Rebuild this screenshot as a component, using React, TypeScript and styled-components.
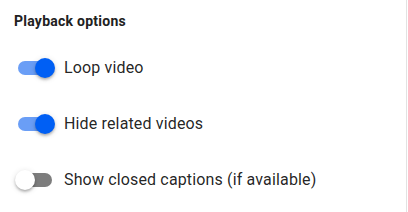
import React, { useState } from 'react';
import styled, { createGlobalStyle } from 'styled-components';

const GlobalStyle = createGlobalStyle`
  body {
    margin: 0;
    background: #ffffff;
    font-family: Roboto, 'Liberation Sans', Arial, sans-serif;
  }
`;

const Panel = styled.div`
  width: 407px;
  height: 212px;
  box-sizing: border-box;
  border-right: 1px solid #e2e2e2;
  padding: 11px 16px 0 14px;
`;

const Heading = styled.div`
  font-size: 14px;
  line-height: 20px;
  font-weight: 700;
  letter-spacing: 0.25px;
  color: #212121;
`;

const OptionList = styled.div`
  display: flex;
  flex-direction: column;
  margin-top: 9px;
  margin-left: -8px;
`;

const Row = styled.label`
  display: flex;
  align-items: center;
  height: 56px;
  cursor: pointer;
`;

const SwitchRoot = styled.span`
  position: relative;
  display: inline-flex;
  width: 58px;
  height: 38px;
  padding: 12px;
  box-sizing: border-box;
  flex-shrink: 0;
`;

const Track = styled.span<{ $on: boolean }>`
  width: 100%;
  height: 100%;
  border-radius: 7px;
  background: ${({ $on }) => ($on ? '#6a9ef6' : '#7d7d7d')};
`;

const Thumb = styled.span<{ $on: boolean }>`
  position: absolute;
  top: 9px;
  left: ${({ $on }) => ($on ? '29px' : '9px')};
  width: 20px;
  height: 20px;
  border-radius: 50%;
  background: ${({ $on }) => ($on ? '#005ff4' : '#ffffff')};
  box-shadow: 0px 2px 3px -1px rgba(0, 0, 0, 0.2), 0px 2px 3px 0px rgba(0, 0, 0, 0.14),
    0px 1px 6px 0px rgba(0, 0, 0, 0.12);
  transition: left 0.15s;
`;

const LabelText = styled.span`
  font-size: 16px;
  line-height: 24px;
  color: rgba(0, 0, 0, 0.87);
  letter-spacing: 0.15px;
`;

const options = [
  { key: 'loop', label: 'Loop video', on: true },
  { key: 'related', label: 'Hide related videos', on: true },
  { key: 'captions', label: 'Show closed captions (if available)', on: false }
];

function Toggle({ on, onClick }: { on: boolean; onClick: () => void }) {
  return (
    <SwitchRoot onClick={onClick}>
      <Track $on={on} />
      <Thumb $on={on} />
    </SwitchRoot>
  );
}

export default function App() {
  const [state, setState] = useState<Record<string, boolean>>(
    Object.fromEntries(options.map((o) => [o.key, o.on]))
  );

  return (
    <>
      <GlobalStyle />
      <Panel>
        <Heading>Playback options</Heading>
        <OptionList>
          {options.map((o) => (
            <Row key={o.key}>
              <Toggle
                on={state[o.key]}
                onClick={() => setState((s) => ({ ...s, [o.key]: !s[o.key] }))}
              />
              <LabelText>{o.label}</LabelText>
            </Row>
          ))}
        </OptionList>
      </Panel>
    </>
  );
}
